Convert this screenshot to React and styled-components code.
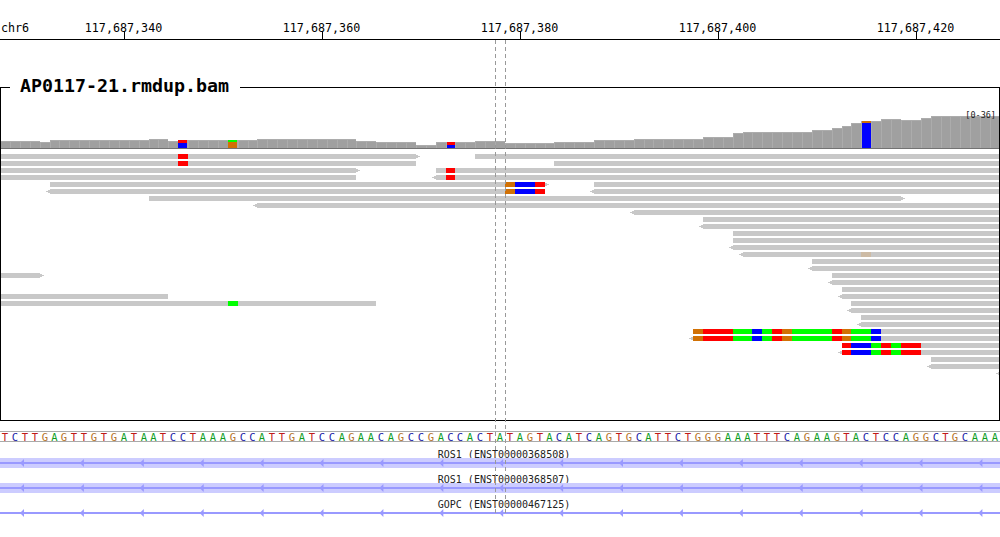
import React from "react";
import styled, { createGlobalStyle } from "styled-components";

const MONO = `"DejaVu Sans Mono", monospace`;

// one base is 9.9px wide, snapped to whole pixels so the columns never drift
const basePx = (k) => Math.round(9.9 * k);
const baseColumns = Array.from({ length: 102 }, (_, k) => `${basePx(k + 1) - basePx(k)}px`).join(" ");

const GlobalStyle = createGlobalStyle`
  html, body {
    margin: 0;
    padding: 0;
    background: #fff;
  }
`;

const Page = styled.div`
  position: relative;
  width: 1000px;
  height: 537px;
  overflow: hidden;
  background: #fff;
  font-family: ${MONO};
`;

const Ruler = styled.div`
  position: relative;
  display: flex;
  height: 39px;
  padding-left: 24.5px;
  border-bottom: 1px solid #000;
`;
const Chrom = styled.span`
  position: absolute;
  left: 1px;
  top: 21px;
  font-size: 11.7px;
  line-height: 14px;
`;
const Tick = styled.div`
  flex: 0 0 198px;
  display: flex;
  flex-direction: column;
  align-items: center;
  justify-content: flex-end;
  font-size: 11.7px;
  line-height: 14px;
  color: #000;

  &::after {
    content: "";
    width: 1px;
    height: 7px;
    margin-left: 2px;
    margin-top: -3px;
    background: #000;
  }
`;

const Panel = styled.section`
  position: relative;
  box-sizing: border-box;
  height: 334px;
  margin-top: 47px;
  border: 1px solid #000;
`;
const PanelTitle = styled.h2`
  position: absolute;
  left: 9px;
  top: -14px;
  margin: 0;
  padding: 0 11px 0 10px;
  background: #fff;
  font-family: ${MONO};
  font-size: 18.3px;
  font-weight: bold;
  line-height: 24px;
  z-index: 2;
`;
const PanelClip = styled.div`
  height: 100%;
  overflow: hidden;
`;
const Coverage = styled.div`
  position: relative;
  display: grid;
  grid-template-columns: ${baseColumns};
  align-items: end;
  height: 60px;
  margin-left: -1px;
  border-bottom: 1px solid #737373;
`;
const Range = styled.span`
  position: absolute;
  right: 3px;
  top: 22px;
  font-size: 8.5px;
  line-height: 11px;
  color: #222;
  z-index: 1;
`;
const Bar = styled.div`
  display: flex;
  flex-direction: column;
  box-sizing: border-box;
  height: ${(p) => p.$height}px;
  background: #a0a0a0;
  border-left: 1px solid #acacac;
  border-top: 1px solid #acacac;
`;
// a bar split by mismatches has no top edge, and its light gap can fall on either side
const SplitBar = styled.div`
  display: flex;
  flex-direction: column;
  box-sizing: border-box;
  height: ${(p) => p.$height}px;
  ${(p) => (p.$gapRight ? "border-right" : "border-left")}: 1px solid #acacac;
`;
const BarPart = styled.div`
  height: ${(p) => p.$size}px;
  background: ${(p) => p.$color};
`;

const Pileup = styled.div`
  display: flex;
  flex-direction: column;
  gap: 2px;
  margin: 5px 0 0 -1px;
`;
const Row = styled.div`
  display: grid;
  grid-template-columns: ${baseColumns};
  grid-template-rows: 5px;
`;
const Read = styled.div`
  position: relative;
  grid-row: 1;
  grid-column: ${(p) => p.$from + 1} / ${(p) => p.$to + 1};
  background: #c8c8c8;

  ${(p) =>
    p.$dir &&
    `
    &::before, &::after {
      content: "";
      position: absolute;
      background: #c8c8c8;
      ${p.$dir === "right" ? "left: 100%;" : "right: 100%;"}
    }
    &::before { top: 1px; width: 2px; height: 3px; }
    &::after { top: 2px; width: 4px; height: 1px; }
  `}
`;
const Mismatch = styled.div`
  position: relative;
  grid-row: 1;
  grid-column: ${(p) => p.$from + 1} / ${(p) => p.$to + 1};
  background: ${(p) => p.$color};
`;

const Sequence = styled.div`
  display: grid;
  grid-template-columns: ${baseColumns};
  height: 9px;
  margin-top: 10px;
  border-top: 1px solid #aaa;
  border-bottom: 1px solid #aaa;
`;
const Base = styled.span`
  font-family: ${MONO};
  font-size: 10.5px;
  line-height: 10px;
  text-align: center;
  color: ${(p) => p.$color};
`;

const Genes = styled.div`
  display: flex;
  flex-direction: column;
  gap: 5px;
  margin-top: 6px;
`;
const GeneLabel = styled.div`
  height: 10px;
  font-size: 10px;
  line-height: 14px;
  text-align: center;
  color: #222;
  padding-left: 8px;
`;
const GeneBand = styled.svg`
  position: relative;
  display: block;
  width: 1000px;
  height: 10px;
`;

const Cursor = styled.div`
  position: absolute;
  top: 40px;
  left: ${(p) => p.$x}px;
  width: 1px;
  height: 476px;
  background: repeating-linear-gradient(to bottom, #999 0 4px, transparent 4px 7px);
  z-index: 3;
`;

const RED = "#ff0000";
const BLUE = "#0000ff";
const GREEN = "#00ff00";
const ORANGE = "#d17105";
const TAN = "#cdbba5";

// [first base, base after last, top y of the bar]
const coverageTops = [
  [0, 4, 141], [4, 5, 142], [5, 15, 140], [15, 17, 139], [17, 18, 141], [18, 23, 140],
  [23, 26, 140], [26, 36, 139], [36, 38, 141], [38, 42, 142], [42, 44, 145], [44, 48, 142],
  [48, 51, 141], [51, 56, 143], [56, 60, 142], [60, 64, 140], [64, 71, 139], [71, 74, 137],
  [74, 75, 133], [75, 82, 132], [82, 84, 130], [84, 85, 128], [85, 86, 126], [86, 87, 123],
  [87, 89, 121], [89, 91, 119], [91, 93, 120], [93, 94, 118], [94, 102, 116],
];
const coverageParts = {
  18: { gapRight: true, parts: [[3, RED], [5, BLUE]] },
  23: { gapRight: true, parts: [[2, GREEN], [6, ORANGE]] },
  45: { parts: [[3, RED], [3, BLUE]] },
  87: { parts: [[2, ORANGE], [25, BLUE]] },
};

const bars = [];
coverageTops.forEach(([from, to, top]) => {
  for (let k = from; k < to; k++) bars.push({ k, height: 148 - top });
});

const striped = [
  [70, 71, ORANGE], [71, 74, RED], [74, 76, GREEN], [76, 77, BLUE], [77, 78, GREEN], [78, 79, RED],
  [79, 80, ORANGE], [80, 84, GREEN], [84, 85, RED], [85, 86, ORANGE], [86, 88, GREEN], [88, 89, BLUE],
];
const striped2 = [
  [85, 86, RED], [86, 88, BLUE], [88, 89, GREEN], [89, 90, RED], [90, 91, GREEN], [91, 93, RED],
];
const tail = [[51, 52, ORANGE], [52, 54, BLUE], [54, 55, RED]];

// each row: list of reads { from, to, dir, marks }
const rows = [
  [{ from: 0, to: 42, dir: "right", marks: [[18, 19, RED]] }, { from: 48, to: 102 }],
  [{ from: 0, to: 42, marks: [[18, 19, RED]] }, { from: 56, to: 102 }],
  [{ from: 0, to: 36, dir: "right" }, { from: 44, to: 102, marks: [[45, 46, RED]] }],
  [{ from: 0, to: 36 }, { from: 44, to: 102, dir: "left", marks: [[45, 46, RED]] }],
  [{ from: 5, to: 55, dir: "right", marks: tail }, { from: 60, to: 102 }],
  [{ from: 5, to: 55, dir: "left", marks: tail }, { from: 60, to: 102, dir: "left" }],
  [{ from: 15, to: 91, dir: "right" }],
  [{ from: 26, to: 102, dir: "left" }],
  [{ from: 64, to: 102, dir: "left" }],
  [{ from: 71, to: 102 }],
  [{ from: 71, to: 102, dir: "left" }],
  [{ from: 74, to: 102 }],
  [{ from: 74, to: 102 }],
  [{ from: 74, to: 102, dir: "left" }],
  [{ from: 75, to: 102, dir: "left", marks: [[87, 88, TAN]] }],
  [{ from: 82, to: 102 }],
  [{ from: 82, to: 102, dir: "left" }],
  [{ from: 0, to: 4, dir: "right" }, { from: 84, to: 102 }],
  [{ from: 84, to: 102, dir: "left" }],
  [{ from: 85, to: 102 }],
  [{ from: 0, to: 17 }, { from: 85, to: 102, dir: "left" }],
  [{ from: 0, to: 38, marks: [[23, 24, GREEN]] }, { from: 86, to: 102 }],
  [{ from: 86, to: 102, dir: "left" }],
  [{ from: 87, to: 102 }],
  [{ from: 87, to: 102, dir: "left" }],
  [{ from: 70, to: 102, marks: striped }],
  [{ from: 70, to: 102, dir: "left", marks: striped }],
  [{ from: 85, to: 102, marks: striped2 }],
  [{ from: 85, to: 102, dir: "left", marks: striped2 }],
  [{ from: 94, to: 102 }],
  [{ from: 94, to: 102, dir: "left" }],
  [{ from: 101, to: 102, dir: "left" }],
];

const bases =
  "TCTTGAGTTGTGATAATCCTAAAGCCATTGATCC" +
  "AGAACAGCCGACCACTATAGTACATCAGTGCATTC" +
  "TGGGAAATTTCAGAAGTACTCCAGGCTGCAAA";
const baseColors = { A: "#0f9d1e", C: "#1a1aa6", G: "#b5722a", T: "#c01818" };

const ticks = ["117,687,340", "117,687,360", "117,687,380", "117,687,400", "117,687,420"];

const arrows = Array.from({ length: 17 }, (_, i) => 24 + i * 59.9);

const genes = [
  { name: "ROS1 (ENST00000368508)", band: true },
  { name: "ROS1 (ENST00000368507)", band: true },
  { name: "GOPC (ENST00000467125)", band: false },
];

function Gene({ name, band }) {
  return (
    <div>
      <GeneLabel>{name}</GeneLabel>
      <GeneBand viewBox="0 0 1000 10">
        {band && <rect width="1000" height="10" fill="#ccccff" />}
        <rect y="4" width="1000" height="2" fill="#9999ff" />
        {arrows.map((x) => (
          <polygon key={x} points={`${x},1 ${x},9 ${x - 4},5`} fill="#9999ff" />
        ))}
      </GeneBand>
    </div>
  );
}

export default function App() {
  return (
    <Page>
      <GlobalStyle />
      <Ruler>
        <Chrom>chr6</Chrom>
        {ticks.map((t) => (
          <Tick key={t}>{t}</Tick>
        ))}
      </Ruler>

      <Panel>
        <PanelTitle>AP0117-21.rmdup.bam</PanelTitle>
        <PanelClip>
          <Coverage>
            <Range>[0-36]</Range>
            {bars.map(({ k, height }) =>
              coverageParts[k] ? (
                <SplitBar key={k} $height={height} $gapRight={coverageParts[k].gapRight}>
                  {coverageParts[k].parts.map(([size, color]) => (
                    <BarPart key={color} $size={size} $color={color} />
                  ))}
                </SplitBar>
              ) : (
                <Bar key={k} $height={height} />
              )
            )}
          </Coverage>
          <Pileup>
            {rows.map((reads, i) => (
              <Row key={i}>
                {reads.map((r) => (
                  <React.Fragment key={r.from}>
                    <Read $from={r.from} $to={r.to} $dir={r.dir} />
                    {(r.marks || []).map(([from, to, color]) => (
                      <Mismatch key={from} $from={from} $to={to} $color={color} />
                    ))}
                  </React.Fragment>
                ))}
              </Row>
            ))}
          </Pileup>
        </PanelClip>
      </Panel>

      <Sequence>
        {bases.split("").map((b, i) => (
          <Base key={i} $color={baseColors[b]}>
            {b}
          </Base>
        ))}
      </Sequence>

      <Genes>
        {genes.map((g) => (
          <Gene key={g.name} name={g.name} band={g.band} />
        ))}
      </Genes>

      <Cursor $x={495} />
      <Cursor $x={505} />
    </Page>
  );
}
